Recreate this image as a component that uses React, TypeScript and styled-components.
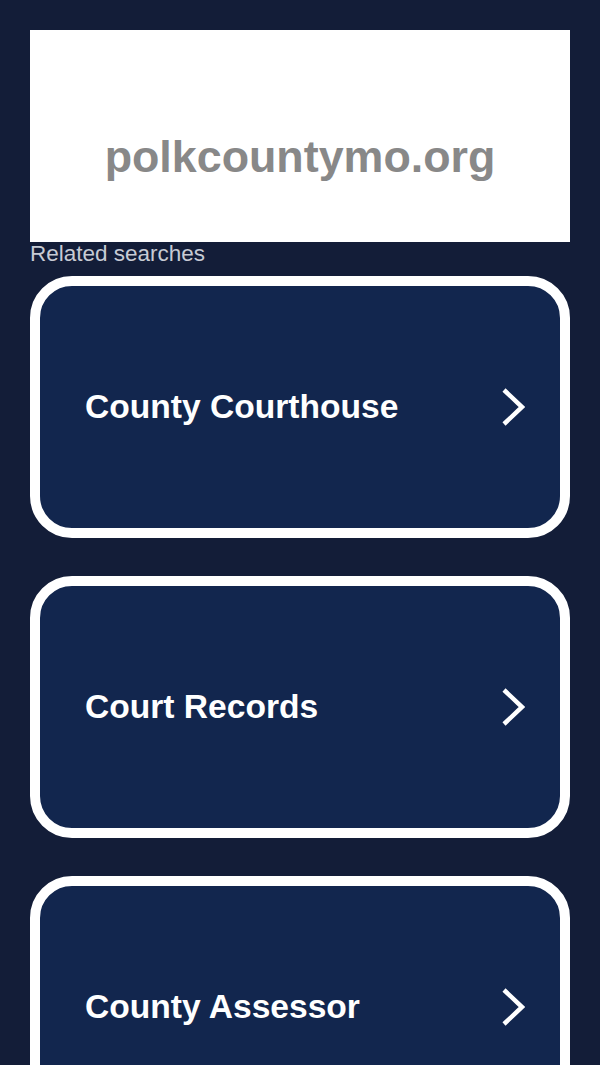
import React from "react";
import styled, { createGlobalStyle } from "styled-components";

const GlobalStyle = createGlobalStyle`
  html, body {
    margin: 0;
    padding: 0;
    background: #131d38;
  }
  body {
    font-family: "Liberation Sans", Arial, sans-serif;
  }
`;

const Page = styled.div`
  padding: 30px;
  display: flex;
  flex-direction: column;
`;

const Banner = styled.div`
  background: #ffffff;
  height: 212px;
  display: flex;
  align-items: center;
  justify-content: center;
  padding-top: 40px;
  box-sizing: border-box;
`;

const Domain = styled.div`
  font-size: 44.8px;
  font-weight: 700;
  color: #888888;
`;

const Heading = styled.div`
  font-size: 22.5px;
  color: #c7cbd4;
  line-height: 24px;
  margin-bottom: 10px;
`;

const List = styled.div`
  display: flex;
  flex-direction: column;
  gap: 38px;
`;

const Card = styled.a`
  display: flex;
  align-items: center;
  justify-content: space-between;
  height: 262px;
  box-sizing: border-box;
  border: 10px solid #ffffff;
  border-radius: 42px;
  background: #12264e;
  padding: 0 35px 0 45px;
  text-decoration: none;
`;

const Label = styled.span`
  color: #ffffff;
  font-size: 33.6px;
  font-weight: 700;
`;

const Chevron = () => (
  <svg width="24" height="40" viewBox="0 0 24 40">
    <polyline
      points="3,3 21,20 3,37"
      fill="none"
      stroke="#ffffff"
      strokeWidth="4.5"
      strokeLinejoin="miter"
    />
  </svg>
);

const items = ["County Courthouse", "Court Records", "County Assessor"];

export default function App() {
  return (
    <>
      <GlobalStyle />
      <Page>
        <Banner>
          <Domain>polkcountymo.org</Domain>
        </Banner>
        <Heading>Related searches</Heading>
        <List>
          {items.map((t) => (
            <Card key={t} href="#">
              <Label>{t}</Label>
              <Chevron />
            </Card>
          ))}
        </List>
      </Page>
    </>
  );
}
